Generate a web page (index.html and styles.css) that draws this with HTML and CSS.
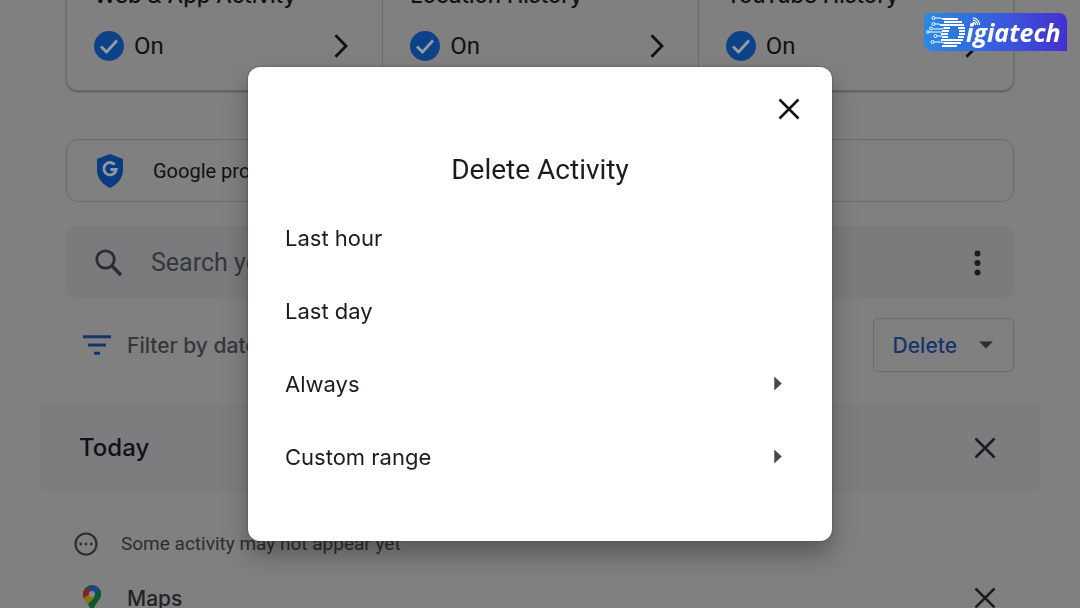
FILE: index.html
```html
<!DOCTYPE html>
<html lang="en">
<head>
<meta charset="utf-8">
<meta name="viewport" content="width=device-width, initial-scale=1">
<title>Delete Activity</title>
<link rel="stylesheet" href="styles.css">
</head>
<body>
<svg class="defs" aria-hidden="true">
  <symbol id="check" viewBox="0 0 30 30"><circle cx="15" cy="15" r="15" fill="#0e4288"/><path d="M7 15.500l5.500 5.500L23 9.500" fill="none" stroke="#999da3" stroke-width="2.600"/></symbol>
  <symbol id="chevron" viewBox="0 0 14 24"><path d="M1.500 1.200L12 12 1.500 22.800" fill="none" stroke="currentColor" stroke-width="2.800"/></symbol>
  <symbol id="close" viewBox="0 0 22 22"><path d="M1.500 1.500l19 19M20.500 1.500l-19 19" fill="none" stroke="currentColor" stroke-width="2.500"/></symbol>
  <symbol id="arrow" viewBox="0 0 8 16"><path d="M0 0.500L8 8 0 15.500z" fill="currentColor"/></symbol>
</svg>
<main class="page">
  <section class="controls">
    <a class="control" href="#web"><h2 class="control-title">Web &amp; App Activity</h2><span class="control-state"><svg class="check"><use href="#check"/></svg>On<svg class="chevron"><use href="#chevron"/></svg></span></a>
    <a class="control" href="#location"><h2 class="control-title">Location History</h2><span class="control-state"><svg class="check"><use href="#check"/></svg>On<svg class="chevron"><use href="#chevron"/></svg></span></a>
    <a class="control" href="#youtube"><h2 class="control-title">YouTube History</h2><span class="control-state"><svg class="check"><use href="#check"/></svg>On<svg class="chevron"><use href="#chevron"/></svg></span></a>
  </section>
  <section class="notice">
    <svg class="shield" viewBox="0 0 28 34"><path d="M14 0L27 5v11c0 8-5.500 14.500-13 18C6.500 30.500 1 24 1 16V5z" fill="#0a3c84"/><path d="M18.700 10.600A6.200 6.200 0 1 0 20.200 15.500H14.500" fill="none" stroke="#94989e" stroke-width="2.800"/></svg>
    <span>Google protects your privacy</span>
  </section>
  <form class="search">
    <svg class="search-icon" viewBox="0 0 28 28"><circle cx="10.500" cy="10.500" r="8.700" fill="none" stroke="currentColor" stroke-width="2.800"/><path d="M17 17l9 9" stroke="currentColor" stroke-width="3.400"/></svg>
    <input class="search-input" type="search" aria-label="Search your activity" placeholder="Search your activity">
    <button class="icon-button" type="button" aria-label="More options"><svg class="dots" viewBox="0 0 6 26"><circle cx="3" cy="3.500" r="3"/><circle cx="3" cy="13" r="3"/><circle cx="3" cy="22.500" r="3"/></svg></button>
  </form>
  <div class="toolbar">
    <button class="filter" type="button"><svg class="filter-icon" viewBox="0 0 28 20"><path d="M0 1.700h28M5 10h18M11 18.300h6" stroke="currentColor" stroke-width="3"/></svg>Filter by date</button>
    <button class="delete" type="button">Delete<svg class="caret" viewBox="0 0 14 8"><path d="M0 0.500h14L7 7.500z"/></svg></button>
  </div>
  <section class="day">
    <h2 class="day-title">Today</h2>
    <button class="icon-button" type="button" aria-label="Delete today's activity"><svg class="close"><use href="#close"/></svg></button>
  </section>
  <p class="pending"><svg class="pending-icon" viewBox="0 0 24 24"><circle cx="12" cy="12" r="10.500" fill="none" stroke="currentColor" stroke-width="2.200"/><circle cx="6.700" cy="12" r="1.400"/><circle cx="12" cy="12" r="1.400"/><circle cx="17.300" cy="12" r="1.400"/></svg>Some activity may not appear yet</p>
  <section class="entry">
    <svg class="pin" viewBox="0 0 18 26"><defs><clipPath id="pin-shape"><path d="M9 0a9 9 0 0 1 9 9c0 6-6 8.500-7.500 15.500-.5 2-2.500 2-3 0C6 17.500 0 15 0 9a9 9 0 0 1 9-9z"/></clipPath></defs><g clip-path="url(#pin-shape)"><path d="M0 0h18v26H0z" fill="#0c5a2c"/><path d="M-2 13L9 0h10v6L9 12z" fill="#1d4488"/><path d="M18 4v9L9 26H2l7-14z" fill="#0c5a2c"/><path d="M0 14L9 6l2 7L4 20z" fill="#96700c"/><path d="M0 13V3l2-1 7 6z" fill="#80261f"/></g><circle cx="9" cy="9" r="3" fill="#868a90"/></svg>
    <h3 class="entry-title">Maps</h3>
    <button class="icon-button" type="button" aria-label="Delete Maps activity"><svg class="close"><use href="#close"/></svg></button>
  </section>
</main>

<div class="overlay">
  <section class="dialog" role="dialog" aria-modal="true" aria-labelledby="dialog-title">
    <button class="icon-button dialog-close" type="button" aria-label="Close"><svg class="close"><use href="#close"/></svg></button>
    <h1 class="dialog-title" id="dialog-title">Delete Activity</h1>
    <div class="options">
      <button class="option" type="button">Last hour</button>
      <button class="option" type="button">Last day</button>
      <button class="option" type="button">Always<svg class="arrow"><use href="#arrow"/></svg></button>
      <button class="option" type="button">Custom range<svg class="arrow"><use href="#arrow"/></svg></button>
    </div>
  </section>
</div>

<div class="brand" role="img" aria-label="Digiatech">
  <svg class="brand-mark" viewBox="0 0 40 32" fill="none" stroke="#fff">
    <path stroke-width="2" d="M17 3H32M18 6H36M14 9H38M18 12H24M32 12H39M16 15H23M33 15H39M15 18H22M33 18H39M16 21H22M32 21H38M15 24H37M18 27H35M16 30H31"/>
    <path stroke-width="1" d="M9 2h5l3 1M9 8h4l2 1M7 13h8l3-1M3 16h13M11 20h5M8 26h7l3 1"/>
    <g stroke-width="1"><circle cx="7.500" cy="2" r="1.500"/><circle cx="7.500" cy="8" r="1.500"/><circle cx="5" cy="12.500" r="1.500"/><circle cx="1.700" cy="16" r="1.300"/><circle cx="9.500" cy="20" r="1.500"/><circle cx="6.500" cy="26" r="1.500"/></g>
  </svg>
  <span class="brand-name">igiatech</span>
  <svg class="brand-signal" viewBox="0 0 10 10" fill="none" stroke="#fff"><path stroke-width="1.400" d="M2 6a3 3 0 0 1 3 3M2 3.500A5.500 5.500 0 0 1 7.300 9M2 1a8 8 0 0 1 7.500 8"/></svg>
</div>
</body>
</html>
```
FILE: styles.css
```css
:root {
  --surface: #808080;
  --ink: #101114;
  --muted: #2c2d30;
  --line: #6b6b6d;
  --blue: #16346c;
  --heading: Inter, Roboto, sans-serif;
}

* { box-sizing: border-box; }

body {
  margin: 0;
  height: 100vh;
  overflow: hidden;
  background: var(--surface);
  color: var(--ink);
  font-family: Roboto, "Liberation Sans", sans-serif;
}

h1, h2, h3, p { margin: 0; font-weight: 400; }

button {
  padding: 0;
  border: 0;
  background: none;
  color: inherit;
  font: inherit;
  cursor: pointer;
}

svg { display: block; flex: none; }

.defs { position: absolute; width: 0; height: 0; }

.page {
  max-width: 998px;
  margin: -44px auto 0;
  padding: 0 25px;
}

.controls {
  display: grid;
  grid-template-columns: repeat(3, 1fr);
  border: 1px solid var(--line);
  border-radius: 12px;
  box-shadow: 0 1px 2px #505050;
}

.control {
  padding: 24px 34px 28px 27px;
  color: inherit;
  text-decoration: none;
}

.control + .control { border-left: 1px solid var(--line); }

.control-title {
  margin-bottom: 21px;
  font-family: var(--heading);
  font-size: 22px;
  font-weight: 500;
  line-height: 28px;
}

.control-state {
  display: flex;
  align-items: center;
  gap: 10px;
  font-size: 24px;
  line-height: 32px;
}

.check { width: 30px; height: 30px; }
.chevron { width: 14px; height: 24px; margin-left: auto; }

.notice {
  display: flex;
  align-items: center;
  gap: 29px;
  height: 63px;
  margin-top: 48px;
  padding: 0 29px;
  border: 1px solid var(--line);
  border-radius: 12px;
  font-size: 20px;
  white-space: nowrap;
}

.shield { width: 28px; height: 34px; }

.search {
  display: flex;
  align-items: center;
  gap: 28px;
  height: 73px;
  margin-top: 24px;
  padding: 0 13px 0 29px;
  border-radius: 12px;
  background: #797b7d;
  color: var(--muted);
}

.search-icon { width: 28px; height: 28px; }

.search-input {
  flex: 1;
  min-width: 0;
  padding: 0;
  border: 0;
  outline: 0;
  background: none;
  color: inherit;
  font: inherit;
  font-size: 25px;
}

.search-input::placeholder { color: #36373a; opacity: 1; }

.icon-button {
  display: grid;
  place-items: center;
  width: 48px;
  height: 48px;
}

.dots { width: 7px; height: 26px; fill: #1c1d1f; }
.close { width: 22px; height: 22px; }

.toolbar {
  display: flex;
  align-items: center;
  justify-content: space-between;
  margin-top: 19px;
  padding-left: 17px;
}

.filter {
  display: flex;
  align-items: center;
  gap: 16px;
  color: #36373a;
  font-family: var(--heading);
  font-size: 21px;
  font-weight: 500;
}

.filter-icon { width: 28px; height: 20px; color: var(--blue); }

.delete {
  display: flex;
  align-items: center;
  gap: 22px;
  height: 54px;
  padding: 0 20px 0 19px;
  border: 1px solid var(--line);
  border-radius: 5px;
  color: var(--blue);
  font-family: var(--heading);
  font-size: 21px;
  font-weight: 500;
}

.caret { width: 14px; height: 8px; fill: var(--muted); }

.day {
  display: flex;
  align-items: center;
  justify-content: space-between;
  height: 87px;
  margin: 32px -25px 0;
  padding: 0 30px 0 38px;
  background: #7d7d80;
}

.day-title {
  font-family: var(--heading);
  font-size: 24px;
  font-weight: 500;
}

.day .close, .entry .close { color: #1c1d1f; }

.pending {
  display: flex;
  align-items: center;
  gap: 23px;
  margin-top: 38px;
  padding-left: 8px;
  color: var(--muted);
  font-size: 19px;
  line-height: 30px;
}

.pending-icon { width: 24px; height: 24px; fill: currentColor; }

.entry {
  display: flex;
  align-items: center;
  gap: 26px;
  height: 48px;
  margin-top: 15px;
  padding: 0 5px 0 17px;
}

.pin { width: 18px; height: 26px; }

.entry-title {
  flex: 1;
  color: #222326;
  font-family: var(--heading);
  font-size: 21px;
  font-weight: 500;
}

.overlay {
  position: fixed;
  inset: 0;
  display: grid;
  place-items: center;
  padding: 24px;
}

.dialog {
  width: 100%;
  max-width: 584px;
  padding: 18px 19px 48px 37px;
  border-radius: 12px;
  background: #fff;
  color: #1b1c1f;
  box-shadow: 0 0 2px #404040, 0 14px 24px rgba(0, 0, 0, .3);
}

.dialog-close { margin-left: auto; color: #101114; }

.dialog-title {
  margin: 19px 18px 13px 0;
  font-size: 28px;
  line-height: 36px;
  text-align: center;
}

.option {
  display: flex;
  align-items: center;
  justify-content: space-between;
  width: 100%;
  height: 73px;
  padding-right: 31px;
  font-family: var(--heading);
  font-size: 22px;
}

.arrow { width: 8px; height: 15px; color: #48494c; }

.brand {
  position: absolute;
  top: 13px;
  right: 13px;
  display: flex;
  align-items: center;
  width: 143px;
  height: 38px;
  padding-left: 2px;
  border-radius: 6px 8px 0 8px;
  background: linear-gradient(90deg, #2889e5, #3b55da 60%, #4330d0);
  color: #fff;
}

.brand-mark { width: 40px; height: 32px; }

.brand-name {
  font-family: "Open Sans", sans-serif;
  font-size: 25px;
  font-style: italic;
  font-weight: 700;
  line-height: 38px;
}

.brand-signal {
  position: absolute;
  top: 4px;
  left: 47px;
  width: 9px;
  height: 9px;
}
```
